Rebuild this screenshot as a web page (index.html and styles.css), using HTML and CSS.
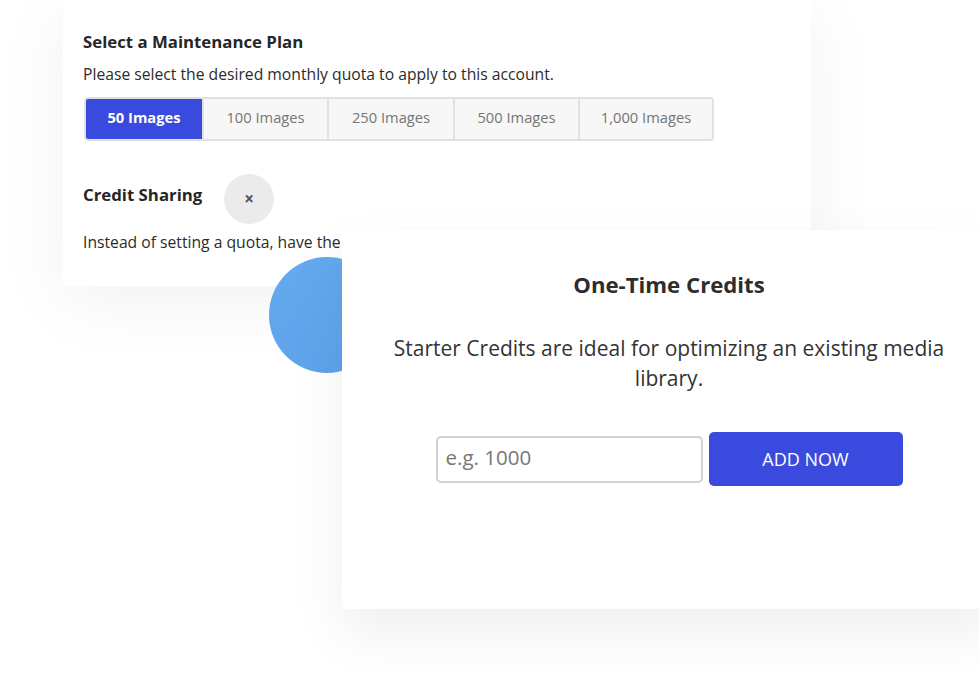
FILE: index.html
```html
<!DOCTYPE html>
<html>
<head>
<meta charset="utf-8">
<link rel="stylesheet" href="styles.css">
</head>
<body>
<div class="stage">
  <section class="plan-card">
    <h2 class="plan-title">Select a Maintenance Plan</h2>
    <p class="plan-text">Please select the desired monthly quota to apply to this account.</p>
    <div class="seg-group">
      <div class="seg seg-1 active">50 Images</div>
      <div class="seg seg-2">100 Images</div>
      <div class="seg seg-3">250 Images</div>
      <div class="seg seg-4">500 Images</div>
      <div class="seg seg-5">1,000 Images</div>
    </div>
    <div class="share-row">
      <h3 class="share-title">Credit Sharing</h3>
      <div class="close-btn">×</div>
    </div>
    <p class="share-text">Instead of setting a quota, have the account share credits with the parent account.</p>
  </section>
  <div class="blob"></div>
  <section class="credit-card">
    <h2 class="credit-title">One-Time Credits</h2>
    <p class="credit-text">Starter Credits are ideal for optimizing an existing media library.</p>
    <div class="credit-form">
      <input class="credit-input" type="text" placeholder="e.g. 1000">
      <button class="credit-btn">ADD NOW</button>
    </div>
  </section>
</div>
</body>
</html>
```

FILE: styles.css
```css
* { box-sizing: border-box; }
html, body {
  margin: 0;
  padding: 0;
  background: #ffffff;
  overflow: hidden;
}
body {
  font-family: "Open Sans", "Noto Sans", sans-serif;
  color: #333333;
}
.stage {
  position: relative;
  width: 979px;
  height: 673px;
  overflow: hidden;
}
.plan-card {
  position: relative;
  z-index: 1;
  margin-left: 63px;
  width: 748px;
  height: 286px;
  background: #ffffff;
  padding: 31px 0 0 20px;
  box-shadow: 0 14px 70px rgba(0, 0, 0, 0.06);
  overflow: hidden;
}
.plan-title {
  margin: 0;
  font-size: 16.8px;
  line-height: 22px;
  font-weight: 700;
  color: #262626;
}
.plan-text {
  margin: 11px 0 0;
  font-size: 15.7px;
  line-height: 20px;
  color: #2b2b2b;
}
.seg-group {
  display: flex;
  margin: 13px 0 0 1px;
  width: 630px;
  height: 44px;
  border: 2px solid #e1e1e1;
  border-radius: 4px;
  overflow: hidden;
  background: #f7f7f7;
}
.seg {
  display: flex;
  align-items: center;
  justify-content: center;
  height: 40px;
  font-size: 14.7px;
  color: #757575;
  border-left: 2px solid #e1e1e1;
  padding-bottom: 4px;
}
.seg-1 { width: 116px; border-left: 0; }
.seg-2 { width: 125px; }
.seg-3 { width: 126px; }
.seg-4 { width: 125px; }
.seg-5 { flex: 1; }
.seg.active {
  background: #3b4ade;
  color: #ffffff;
  font-weight: 700;
}
.share-row {
  display: flex;
  align-items: flex-start;
  margin-top: 33px;
  height: 51px;
}
.share-title {
  margin: 10px 0 0;
  font-size: 16.8px;
  line-height: 22px;
  font-weight: 700;
  color: #262626;
  width: 141px;
}
.close-btn {
  width: 50px;
  height: 50px;
  border-radius: 50%;
  background: #ebebeb;
  display: flex;
  align-items: center;
  justify-content: center;
  font-size: 17px;
  font-weight: 700;
  color: #555555;
  line-height: 1;
  padding-bottom: 1px;
}
.share-text {
  margin: 7px 0 0;
  font-size: 15.7px;
  line-height: 20px;
  color: #2b2b2b;
  white-space: nowrap;
}
.blob {
  position: absolute;
  z-index: 2;
  left: 269px;
  top: 257px;
  width: 116px;
  height: 116px;
  border-radius: 50%;
  background: linear-gradient(160deg, #64aaee 0%, #5da2ea 100%);
}
.credit-card {
  position: absolute;
  z-index: 3;
  left: 342px;
  top: 230px;
  width: 654px;
  height: 379px;
  background: #ffffff;
  padding-top: 40px;
  text-align: center;
  box-shadow: 0 24px 55px rgba(0, 0, 0, 0.065);
}
.credit-title {
  margin: 0;
  font-size: 22.2px;
  line-height: 30px;
  font-weight: 700;
  color: #2d2d2d;
}
.credit-text {
  margin: 33px auto 0;
  max-width: 580px;
  font-size: 21px;
  line-height: 30px;
  color: #333333;
}
.credit-form {
  display: flex;
  align-items: center;
  justify-content: center;
  gap: 6px;
  margin-top: 39px;
}
.credit-input {
  width: 267px;
  height: 47px;
  border: 2px solid #d2d2d2;
  border-radius: 5px;
  padding: 0 8px 4px;
  font-family: "Open Sans", "Noto Sans", sans-serif;
  font-size: 20.5px;
  color: #333333;
  background: #ffffff;
  outline: none;
}
.credit-input::placeholder {
  color: #777777;
}
.credit-btn {
  width: 194px;
  height: 54px;
  border: 0;
  border-radius: 5px;
  background: #3b4ade;
  color: #ffffff;
  font-family: "Open Sans", "Noto Sans", sans-serif;
  font-size: 18px;
  font-weight: 400;
  cursor: pointer;
  padding-bottom: 2px;
}
```
